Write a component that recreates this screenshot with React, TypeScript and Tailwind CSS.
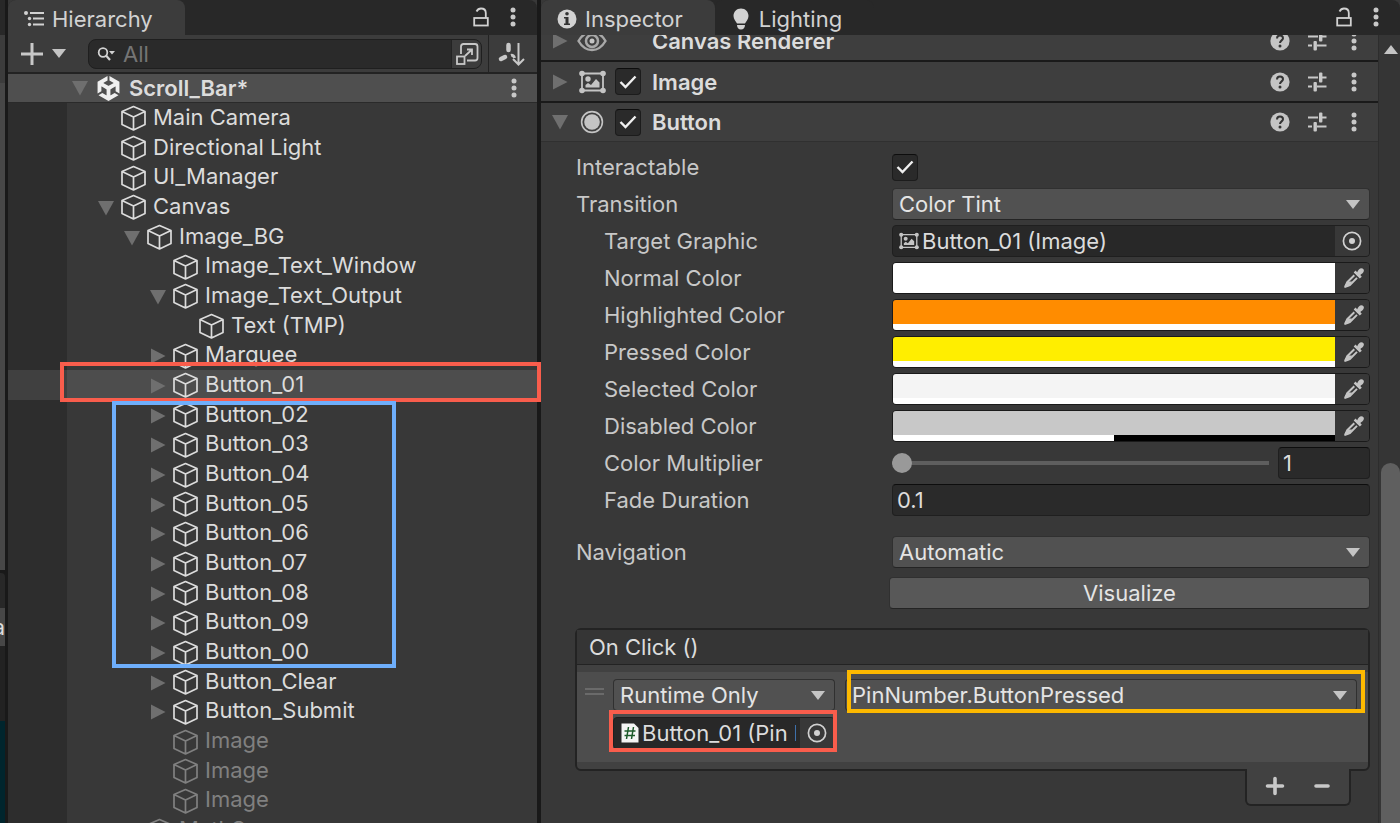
import { useState } from 'react';
import type { ReactNode } from 'react';
import clsx from 'clsx';
import { FaUnity } from 'react-icons/fa6';

type Node = {
  name: string;
  depth: number;
  fold?: 'open' | 'closed';
  selected?: boolean;
  disabled?: boolean;
};

const nodes: Node[] = [
  { name: 'Main Camera', depth: 0 },
  { name: 'Directional Light', depth: 0 },
  { name: 'UI_Manager', depth: 0 },
  { name: 'Canvas', depth: 0, fold: 'open' },
  { name: 'Image_BG', depth: 1, fold: 'open' },
  { name: 'Image_Text_Window', depth: 2 },
  { name: 'Image_Text_Output', depth: 2, fold: 'open' },
  { name: 'Text (TMP)', depth: 3 },
  { name: 'Marquee', depth: 2, fold: 'closed' },
  { name: 'Button_01', depth: 2, fold: 'closed', selected: true },
  { name: 'Button_02', depth: 2, fold: 'closed' },
  { name: 'Button_03', depth: 2, fold: 'closed' },
  { name: 'Button_04', depth: 2, fold: 'closed' },
  { name: 'Button_05', depth: 2, fold: 'closed' },
  { name: 'Button_06', depth: 2, fold: 'closed' },
  { name: 'Button_07', depth: 2, fold: 'closed' },
  { name: 'Button_08', depth: 2, fold: 'closed' },
  { name: 'Button_09', depth: 2, fold: 'closed' },
  { name: 'Button_00', depth: 2, fold: 'closed' },
  { name: 'Button_Clear', depth: 2, fold: 'closed' },
  { name: 'Button_Submit', depth: 2, fold: 'closed' },
  { name: 'Image', depth: 2, disabled: true },
  { name: 'Image', depth: 2, disabled: true },
  { name: 'Image', depth: 2, disabled: true },
  { name: 'MathS', depth: 1, fold: 'closed', disabled: true },
];

const swatches = [
  { label: 'Normal Color', color: '#ffffff', alpha: 100 },
  { label: 'Highlighted Color', color: '#ff8c00', alpha: 100 },
  { label: 'Pressed Color', color: '#ffee00', alpha: 100 },
  { label: 'Selected Color', color: '#f4f4f4', alpha: 100 },
  { label: 'Disabled Color', color: '#c8c8c8', alpha: 50 },
];

/* ---------- icons ---------- */

function Fold({ open }: { open: boolean }) {
  return (
    <svg viewBox="0 0 18 18" className="h-[18px] w-[18px] shrink-0 fill-[#6f6f6f]">
      <path d={open ? 'M1 2H17L9 16.500Z' : 'M2 1.500L16.500 9L2 16.500Z'} />
    </svg>
  );
}

function Caret({ className }: { className?: string }) {
  return (
    <svg viewBox="0 0 14 9" className={clsx('pointer-events-none h-[9px] w-[14px] shrink-0 fill-[#c4c4c4]', className)}>
      <path d="M0 0H14L7 9Z" />
    </svg>
  );
}

function Cube() {
  return (
    <svg viewBox="0 0 26 26" className="h-[26px] w-[26px] shrink-0" fill="none" stroke="currentColor" strokeWidth="1.700" strokeLinejoin="round">
      <path d="M12.500 1.500L24 6.500V19.500L12.500 25L1 19.500V6.500ZM1 6.500L12.500 12L24 6.500M12.500 12V25" />
    </svg>
  );
}

function Dots() {
  return (
    <svg viewBox="0 0 6 20" className="h-5 w-[6px] shrink-0 fill-[#c8c8c8]">
      <circle cx="3" cy="3" r="2.500" />
      <circle cx="3" cy="10" r="2.500" />
      <circle cx="3" cy="17" r="2.500" />
    </svg>
  );
}

function Lock() {
  return (
    <svg viewBox="0 0 16 20" className="h-5 w-4 shrink-0" fill="none" stroke="#d2d2d2" strokeWidth="1.800">
      <rect x="1.200" y="11" width="13.600" height="7.500" />
      <path d="M3.500 4.500C4.500 2.500 6 1.500 8 1.500C11 1.500 12.800 3.500 12.800 6V11" />
    </svg>
  );
}

function ListIcon() {
  return (
    <svg viewBox="0 0 20 16" className="h-4 w-5 shrink-0 fill-[#d2d2d2]">
      <circle cx="2" cy="2" r="2" />
      <rect x="6" y="1" width="14" height="2" />
      <circle cx="5.500" cy="7.500" r="1.700" />
      <rect x="9" y="6.500" width="11" height="2" />
      <circle cx="5.500" cy="13.500" r="1.700" />
      <rect x="9" y="12.500" width="11" height="2" />
    </svg>
  );
}

function ImageIcon({ className }: { className: string }) {
  return (
    <svg viewBox="0 0 27 24" className={clsx('shrink-0', className)} fill="#c4c4c4">
      <path d="M3 3.500H24V20.500H3Z" fill="none" stroke="#c4c4c4" strokeWidth="1.800" />
      <circle cx="3" cy="3.500" r="2.800" />
      <circle cx="24" cy="3.500" r="2.800" />
      <circle cx="3" cy="20.500" r="2.800" />
      <circle cx="24" cy="20.500" r="2.800" />
      <circle cx="9" cy="9" r="2.700" />
      <path d="M6.500 17.500V15L9 13L12 15L17 9L20.500 12.500V17.500Z" />
    </svg>
  );
}

function EyeIcon() {
  return (
    <svg viewBox="0 0 30 22" className="h-[22px] w-[30px] shrink-0" fill="none" stroke="#a8a8a8">
      <path d="M1.500 11C5 5 9.500 2 15 2S25 5 28.500 11C25 17 20.500 20 15 20S5 17 1.500 11Z" strokeWidth="2.400" />
      <circle cx="15" cy="11" r="6" strokeWidth="2.500" />
      <circle cx="15" cy="11" r="2.500" fill="#c4c4c4" stroke="none" />
    </svg>
  );
}

function ButtonIcon() {
  return (
    <svg viewBox="0 0 24 24" className="h-6 w-6 shrink-0">
      <circle cx="12" cy="12" r="10.400" fill="none" stroke="#c4c4c4" strokeWidth="1.600" />
      <circle cx="12" cy="12" r="7.800" fill="#c4c4c4" />
    </svg>
  );
}

function Help() {
  return (
    <svg viewBox="0 0 20 20" className="h-5 w-5 shrink-0">
      <circle cx="10" cy="10" r="9.600" fill="#c4c4c4" />
      <path d="M7 7.500C7 5.500 8.300 4.500 10 4.500S13 5.600 13 7.200C13 9.300 10 9.500 10 12" fill="none" stroke="#333" strokeWidth="2" />
      <circle cx="10" cy="15" r="1.500" fill="#333" />
    </svg>
  );
}

function Presets() {
  return (
    <svg viewBox="0 0 20 20" className="h-5 w-5 shrink-0 fill-[#c8c8c8]">
      <rect x="1" y="4.500" width="10" height="2" />
      <rect x="12" y="0.500" width="3.400" height="10" rx="1" />
      <rect x="15" y="4.500" width="4.500" height="2" />
      <rect x="1" y="13.500" width="4" height="2" />
      <rect x="6.500" y="10" width="3.400" height="9.500" rx="1" />
      <rect x="10" y="13.500" width="9.500" height="2" />
    </svg>
  );
}

function Target() {
  return (
    <svg viewBox="0 0 20 20" className="h-5 w-5">
      <circle cx="10" cy="10" r="8.600" fill="none" stroke="#d0d0d0" strokeWidth="1.700" />
      <circle cx="10" cy="10" r="3" fill="#d0d0d0" />
    </svg>
  );
}

function Dropper() {
  return (
    <svg viewBox="0 0 20 20" className="h-5 w-5">
      <path d="M11.500 2.500L13.200 4.200C14 2.500 15.500 0.300 17.500 0.300C19 0.300 19.900 1.500 19.900 2.800C19.700 4.800 17.800 5.800 16.300 7L17.800 8.700L15.800 10.500L9.700 4.500Z" fill="#c4c4c4" />
      <path d="M10.300 7.200L3.200 14.200L1.300 18.800L5.900 17L13 9.900" fill="none" stroke="#c4c4c4" strokeWidth="2" strokeLinejoin="round" />
      <path d="M4 13.500L8 13.500L5 18L0.500 19.500L0.800 17Z" fill="#c4c4c4" />
    </svg>
  );
}

/* ---------- controls ---------- */

function Tab({ active, icon, children }: { active?: boolean; icon: ReactNode; children: ReactNode }) {
  return (
    <button
      role="tab"
      aria-selected={!!active}
      className={clsx('flex h-full items-center gap-2 rounded-t-lg pt-[2px] pr-8 pl-4', active ? 'bg-[#3c3c3c]' : 'bg-[#282828]')}
    >
      {icon}
      {children}
    </button>
  );
}

function TabBar({ children }: { children: ReactNode }) {
  return (
    <div role="tablist" className="flex h-[35px] shrink-0 items-stretch rounded-t-lg bg-[#282828]">
      {children}
      <div className="ml-auto flex items-center gap-[21px] pr-[21px] pb-[2px]">
        <button aria-label="Lock"><Lock /></button>
        <button aria-label="Menu"><Dots /></button>
      </div>
    </div>
  );
}

function Check({ id, label }: { id?: string; label?: string }) {
  const [on, setOn] = useState(true);
  return (
    <span className="grid h-[27px] w-[26px] shrink-0 place-items-center">
      <input
        id={id}
        type="checkbox"
        aria-label={label}
        checked={on}
        onChange={() => setOn(!on)}
        className="col-start-1 row-start-1 h-full w-full appearance-none rounded-sm border border-[#1c1c1c] border-t-[#0d0d0d] bg-[#2a2a2a]"
      />
      {on && (
        <svg viewBox="0 0 18 14" className="pointer-events-none col-start-1 row-start-1 h-[14px] w-[18px]" fill="none" stroke="#f0f0f0" strokeWidth="2.400">
          <path d="M1.500 7L6.500 12L16.500 1.500" />
        </svg>
      )}
    </span>
  );
}

function Select({ id, label, value, className }: { id?: string; label?: string; value: string; className?: string }) {
  return (
    <span className={clsx('grid h-8 items-center', className)}>
      <select
        id={id}
        aria-label={label}
        defaultValue={value}
        className="col-start-1 row-start-1 h-full w-full appearance-none rounded-sm border border-[#303030] border-b-[#242424] bg-[#515151] pl-[6px] text-[#e4e4e4]"
      >
        <option>{value}</option>
      </select>
      <Caret className="col-start-1 row-start-1 mr-[10px] justify-self-end" />
    </span>
  );
}

function ObjectField({ id, label, value, icon, className }: { id?: string; label?: string; value: string; icon: ReactNode; className?: string }) {
  return (
    <span className={clsx('flex h-8 items-center overflow-hidden rounded-sm border border-[#1f1f1f] bg-[#282828] pl-[6px]', className)}>
      {icon}
      <input id={id} aria-label={label} readOnly value={value} className="min-w-0 flex-1 bg-transparent pr-1 pl-[3px] text-[#dcdcdc] outline-none" />
      <button aria-label="Select object" className="grid h-full w-[34px] shrink-0 place-items-center bg-[#383838]">
        <Target />
      </button>
    </span>
  );
}

function Row({ label, id, indent, children }: { label: string; id: string; indent?: boolean; children: ReactNode }) {
  return (
    <div className="flex h-8 items-center">
      <label htmlFor={id} className={clsx('w-[316px] shrink-0 text-[#c8c8c8]', indent && 'pl-7')}>
        {label}
      </label>
      {children}
    </div>
  );
}

function ComponentHeader({ open, icon, check, title, last }: { open?: boolean; icon: ReactNode; check?: boolean; title: string; last?: boolean }) {
  return (
    <header
      className={clsx(
        'flex items-center bg-[#3e3e3e] pr-[21px] pl-[10px]',
        last ? 'h-[39px] border-b border-[#303030]' : 'h-[41px] border-b-2 border-[#1a1a1a]',
      )}
    >
      <Fold open={!!open} />
      <span className="grid w-[46px] shrink-0 place-items-center">{icon}</span>
      <span className="w-[37px] shrink-0">{check && <Check label={`${title} enabled`} />}</span>
      <h2 className="flex-1 font-semibold text-[#dcdcdc]">{title}</h2>
      <button aria-label="Help"><Help /></button>
      <button aria-label="Presets" className="mr-6 ml-[17px]"><Presets /></button>
      <button aria-label="Menu"><Dots /></button>
    </header>
  );
}

/* ---------- panels ---------- */

function Hierarchy() {
  return (
    <section className="flex min-w-0 flex-col bg-[#383838]">
      <TabBar>
        <Tab active icon={<ListIcon />}>Hierarchy</Tab>
      </TabBar>

      <div className="flex h-[39px] shrink-0 items-center border-b-2 border-[#232323] bg-[#3c3c3c] pl-3">
        <button aria-label="Create" className="mr-[22px] flex items-center gap-2">
          <svg viewBox="0 0 24 24" className="h-6 w-6 fill-[#c8c8c8]">
            <path d="M10.500 1H13.500V10.500H23V13.500H13.500V23H10.500V13.500H1V10.500H10.500Z" />
          </svg>
          <Caret />
        </button>
        <div className="flex h-[30px] min-w-0 flex-1 items-center overflow-hidden rounded-lg border border-[#1f1f1f] bg-[#2a2a2a] pl-2">
          <svg viewBox="0 0 18 14" className="h-[14px] w-[18px] shrink-0">
            <circle cx="6" cy="5.500" r="4.300" fill="none" stroke="#d2d2d2" strokeWidth="1.800" />
            <path d="M9 8.500L13 13" stroke="#d2d2d2" strokeWidth="2.200" />
            <path d="M12 4H18L15 7.500Z" fill="#d2d2d2" />
          </svg>
          <input type="search" aria-label="Search" placeholder="All" className="min-w-0 flex-1 bg-transparent pl-2 text-[#d2d2d2] outline-none placeholder:text-[#757575]" />
          <button aria-label="Open search window" className="grid h-full w-[30px] shrink-0 place-items-center border-l border-[#232323] bg-[#3c3c3c]">
            <svg viewBox="0 0 24 24" className="h-6 w-6" fill="none" stroke="#c8c8c8" strokeWidth="1.800">
              <path d="M6 12V4.500Q6 2 8.500 2H20Q22.500 2 22.500 4.500V16Q22.500 18.500 20 18.500H12" />
              <rect x="2" y="14.500" width="7.500" height="7.500" />
              <path d="M10 14L17 7.500M12 7.500H17V13" />
            </svg>
          </button>
        </div>
        <button aria-label="Sort" className="ml-[6px] grid h-full w-[49px] shrink-0 place-items-center border-l border-[#232323] pr-1">
          <svg viewBox="0 0 28 26" className="h-[26px] w-7" fill="none" stroke="#c8c8c8">
            <path d="M11.500 4V9" strokeWidth="4.500" strokeLinecap="round" />
            <path d="M8 16L4 18" strokeWidth="4.500" strokeLinecap="round" />
            <path d="M14 14.500C15.500 14 17 15 17.500 17" strokeWidth="3" />
            <path d="M21.500 2V23M16 18L21.500 23.500L27 18" strokeWidth="2" />
          </svg>
        </button>
      </div>

      <div className="flex h-[29px] shrink-0 items-center border-b border-[#2a2a2a] bg-[#4f4f4f] pr-5 pl-[63px]">
        <Fold open />
        <FaUnity className="mr-2 ml-[7px] h-[25px] w-[25px] shrink-0 text-[#efefef]" />
        <span className="flex-1 font-semibold text-[#dcdcdc]">Scroll_Bar*</span>
        <button aria-label="Scene menu"><Dots /></button>
      </div>

      <div className="relative">
        <ul className="grid h-[742px] auto-rows-fr">
          {nodes.map((node, i) => (
            <li key={i} className={clsx('flex min-h-0', node.selected && 'bg-[#4d4d4d]')}>
              <span className={clsx('w-[59px] shrink-0', node.selected ? 'bg-[#404040]' : 'bg-[#2d2d2d]')} />
              <span
                className={clsx('flex items-center pb-[2px]', node.disabled ? 'text-[#808080]' : 'text-[#dcdcdc]')}
                style={{ paddingLeft: 30 + node.depth * 26 }}
              >
                <span className="w-6 shrink-0 pt-1">{node.fold && <Fold open={node.fold === 'open'} />}</span>
                <span className="mr-[6px] pt-[3px]"><Cube /></span>
                {node.name}
              </span>
            </li>
          ))}
        </ul>
        {/* callouts over the tree */}
        <div className="pointer-events-none absolute top-[259px] -right-1 left-[52px] z-10 h-10 border-4 border-[#f95d4c]" />
        <div className="pointer-events-none absolute top-[298px] left-[104px] z-10 h-[267px] w-[284px] border-4 border-[#6eaefb]" />
      </div>
    </section>
  );
}

function ColorRow({ label, color, alpha }: { label: string; color: string; alpha: number }) {
  const id = label.toLowerCase().replace(' ', '-');
  return (
    <Row label={label} id={id} indent>
      <span className="flex h-full flex-1 overflow-hidden rounded-sm border border-[#1a1a1a]">
        <button id={id} className="flex flex-1 flex-col">
          <span className="block w-full flex-1" style={{ backgroundColor: color }} />
          <span className="block h-[6px] w-full bg-black">
            <span className="block h-full bg-white" style={{ width: `${alpha}%` }} />
          </span>
        </button>
        <button aria-label={`Pick ${label}`} className="grid w-[34px] place-items-center bg-[#383838] pl-1">
          <Dropper />
        </button>
      </span>
    </Row>
  );
}

function OnClick() {
  return (
    <section className="mt-5 -ml-px">
      <div className="rounded-md border-2 border-[#232323] bg-[#414141]">
        <h3 className="flex h-[35px] items-center border-b border-[#232323] bg-[#353535] pl-3 text-[#dcdcdc]">On Click ()</h3>
        <div className="my-[7px] flex h-[90px] bg-[#4d4d4d] pt-[7px] pr-[11px] pl-2">
          <svg viewBox="0 0 20 10" className="mt-2 mr-2 h-[10px] w-5 shrink-0 fill-[#6a6a6a]">
            <rect y="1" width="19" height="2" />
            <rect y="6" width="19" height="2" />
          </svg>
          <div className="relative w-[222px] shrink-0">
            <Select label="Call state" value="Runtime Only" />
            <ObjectField
              label="Target object"
              className="mt-[6px]"
              value="Button_01 (Pin Number)"
              icon={
                <svg viewBox="0 0 18 20" className="ml-px h-5 w-[18px] shrink-0">
                  <path d="M0.500 0.500H13L17.500 5V19.500H0.500Z" fill="#f4f4f4" />
                  <path d="M7.500 4L5.500 16M12.500 4L10.500 16M3.500 8H14.500M3.500 12.500H14" stroke="#1c5a2a" strokeWidth="1.500" />
                </svg>
              }
            />
            <div className="pointer-events-none absolute top-[31px] -right-[2px] -left-1 h-[42px] border-4 border-[#f95d4c]" />
          </div>
          <div className="relative ml-[10px] min-w-0 flex-1">
            <Select label="Function" value="PinNumber.ButtonPressed" />
            <div className="pointer-events-none absolute -top-[9px] -right-2 left-[2px] h-[43px] border-4 border-[#fdb900]" />
          </div>
        </div>
      </div>
      <div className="relative -mt-[2px] mr-[19px] ml-auto flex h-[37px] w-[106px] items-center justify-around rounded-b-md border-2 border-t-0 border-[#232323] bg-[#414141] px-1 pb-[2px]">
        <button aria-label="Add">
          <svg viewBox="0 0 20 20" className="h-5 w-5" stroke="#c8c8c8" strokeWidth="3.600" strokeLinecap="round">
            <path d="M10 2.500V17.500M2.500 10H17.500" />
          </svg>
        </button>
        <button aria-label="Remove">
          <svg viewBox="0 0 20 20" className="h-5 w-5" stroke="#c8c8c8" strokeWidth="3.600" strokeLinecap="round">
            <path d="M4 10H16" />
          </svg>
        </button>
      </div>
    </section>
  );
}

function Inspector() {
  return (
    <section className="flex min-w-0 flex-col bg-[#383838]">
      <TabBar>
        <Tab
          active
          icon={
            <svg viewBox="0 0 20 20" className="h-5 w-5 shrink-0">
              <circle cx="10" cy="10" r="9.500" fill="#d2d2d2" />
              <circle cx="10" cy="4.800" r="1.800" fill="#333" />
              <path d="M7 8H11.500V14.500H13V16H7V14.500H8.500V9.500H7Z" fill="#333" />
            </svg>
          }
        >
          Inspector
        </Tab>
        <Tab
          icon={
            <svg viewBox="0 0 20 22" className="h-[22px] w-5 shrink-0 fill-[#d2d2d2]">
              <path d="M10 0.500C14.500 0.500 17.500 4 17.500 8C17.500 11.500 15 13.500 14 15.500H6C5 13.500 2.500 11.500 2.500 8C2.500 4 5.500 0.500 10 0.500ZM6 17H14C14 19.500 12.500 21.500 10 21.500S6 19.500 6 17Z" />
            </svg>
          }
        >
          Lighting
        </Tab>
      </TabBar>

      <div className="flex min-h-0 flex-1">
        <div className="min-w-0 flex-1 overflow-hidden">
          {/* list is scrolled part way into the first header */}
          <div className="-mt-[14px]">
            <ComponentHeader icon={<EyeIcon />} title="Canvas Renderer" />
            <ComponentHeader icon={<ImageIcon className="h-6 w-[27px]" />} title="Image" check />
            <ComponentHeader open icon={<ButtonIcon />} title="Button" check last />
          </div>

          <div className="flex flex-col gap-[5px] pt-[9px] pr-2 pl-[35px]">
            <Row label="Interactable" id="interactable">
              <Check id="interactable" />
            </Row>
            <Row label="Transition" id="transition">
              <Select id="transition" value="Color Tint" className="flex-1" />
            </Row>
            <Row label="Target Graphic" id="target" indent>
              <ObjectField id="target" className="flex-1" value="Button_01 (Image)" icon={<ImageIcon className="h-[18px] w-5" />} />
            </Row>
            {swatches.map((s) => (
              <ColorRow key={s.label} {...s} />
            ))}
            <Row label="Color Multiplier" id="multiplier" indent>
              <input
                id="multiplier"
                type="range"
                min={1}
                max={5}
                defaultValue={1}
                className="h-5 min-w-0 flex-1 appearance-none bg-transparent [&::-webkit-slider-runnable-track]:h-1 [&::-webkit-slider-runnable-track]:bg-[#5e5e5e] [&::-webkit-slider-thumb]:-mt-2 [&::-webkit-slider-thumb]:h-5 [&::-webkit-slider-thumb]:w-5 [&::-webkit-slider-thumb]:appearance-none [&::-webkit-slider-thumb]:rounded-full [&::-webkit-slider-thumb]:bg-[#999999]"
              />
              <input
                aria-label="Color Multiplier value"
                defaultValue="1"
                className="ml-[9px] h-8 w-[92px] shrink-0 rounded-sm border border-[#1f1f1f] border-t-[#0d0d0d] bg-[#2a2a2a] pl-1 text-[#dcdcdc]"
              />
            </Row>
            <Row label="Fade Duration" id="fade" indent>
              <input
                id="fade"
                defaultValue="0.1"
                className="h-8 min-w-0 flex-1 rounded-sm border border-[#1f1f1f] border-t-[#0d0d0d] bg-[#2a2a2a] pl-1 text-[#dcdcdc]"
              />
            </Row>
            <div className="mt-[15px]">
              <Row label="Navigation" id="navigation">
                <Select id="navigation" value="Automatic" className="flex-1" />
              </Row>
            </div>
            <button className="mt-1 ml-[313px] h-8 rounded-sm border border-[#303030] border-b-[#242424] bg-[#585858] text-[#e4e4e4]">
              Visualize
            </button>
            <div className="-mt-[6px]">
              <OnClick />
            </div>
          </div>
        </div>

        <div className="flex w-[22px] shrink-0 flex-col border-l border-[#2d2d2d] bg-[#353535]">
          <svg viewBox="0 0 14 9" className="mt-[10px] ml-[5px] h-[9px] w-[14px] fill-[#c4c4c4]">
            <path d="M7 0L14 9H0Z" />
          </svg>
          <div className="mt-[409px] ml-[2px] flex-1 rounded-t-full bg-[#5f5f5f]" />
        </div>
      </div>
    </section>
  );
}

/* edge of the windows docked to the left */
function DockEdge() {
  return (
    <div className="flex flex-col overflow-hidden border-r-[3px] border-[#191919] bg-[#191919]">
      <div className="h-[35px] shrink-0 bg-[#282828]" />
      <div className="h-12 shrink-0 bg-[#3c3c3c]" />
      <div className="h-[487px] shrink-0 bg-[#474747]" />
      <div className="mt-[3px] h-[35px] shrink-0 rounded-tr bg-[#282828]" />
      <div className="flex h-[38px] shrink-0 items-center justify-end bg-[#474747] text-[#dcdcdc]">a</div>
      <div className="h-[75px] shrink-0 bg-[#222222]" />
      <div className="flex-1 bg-[#00252d]" />
    </div>
  );
}

export default function App() {
  return (
    <div className="grid h-screen grid-cols-[8px_533fr_859fr] overflow-hidden bg-[#191919] font-['Inter','Liberation_Sans',sans-serif] text-[22px] leading-7 text-[#d2d2d2]">
      <DockEdge />
      <div className="grid min-h-0 min-w-0 pr-1">
        <Hierarchy />
      </div>
      <Inspector />
    </div>
  );
}
